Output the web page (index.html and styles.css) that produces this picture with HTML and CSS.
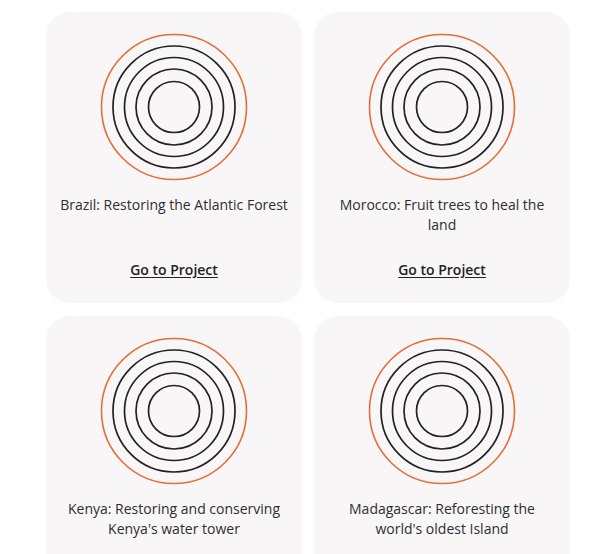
FILE: index.html
```html
<!DOCTYPE html>
<html lang="en">
<head>
<meta charset="utf-8">
<title>Projects</title>
<link rel="stylesheet" href="styles.css">
</head>
<body>
<main class="grid">
  <article class="card">
    <svg class="rings" viewBox="0 0 150 150" width="150" height="150" aria-hidden="true">
      <circle class="outer" cx="75" cy="75" r="72.5"/>
      <circle cx="75" cy="75" r="61"/>
      <circle cx="75" cy="75" r="49.5"/>
      <circle cx="75" cy="75" r="38"/>
      <circle cx="75" cy="75" r="25.5"/>
    </svg>
    <h2 class="title">Brazil: Restoring the Atlantic Forest</h2>
    <a class="link" href="#">Go to Project</a>
  </article>
  <article class="card">
    <svg class="rings" viewBox="0 0 150 150" width="150" height="150" aria-hidden="true">
      <circle class="outer" cx="75" cy="75" r="72.5"/>
      <circle cx="75" cy="75" r="61"/>
      <circle cx="75" cy="75" r="49.5"/>
      <circle cx="75" cy="75" r="38"/>
      <circle cx="75" cy="75" r="25.5"/>
    </svg>
    <h2 class="title">Morocco: Fruit trees to heal the land</h2>
    <a class="link" href="#">Go to Project</a>
  </article>
  <article class="card">
    <svg class="rings" viewBox="0 0 150 150" width="150" height="150" aria-hidden="true">
      <circle class="outer" cx="75" cy="75" r="72.5"/>
      <circle cx="75" cy="75" r="61"/>
      <circle cx="75" cy="75" r="49.5"/>
      <circle cx="75" cy="75" r="38"/>
      <circle cx="75" cy="75" r="25.5"/>
    </svg>
    <h2 class="title">Kenya: Restoring and conserving Kenya's water tower</h2>
    <a class="link" href="#">Go to Project</a>
  </article>
  <article class="card">
    <svg class="rings" viewBox="0 0 150 150" width="150" height="150" aria-hidden="true">
      <circle class="outer" cx="75" cy="75" r="72.5"/>
      <circle cx="75" cy="75" r="61"/>
      <circle cx="75" cy="75" r="49.5"/>
      <circle cx="75" cy="75" r="38"/>
      <circle cx="75" cy="75" r="25.5"/>
    </svg>
    <h2 class="title">Madagascar: Reforesting the world's oldest Island</h2>
    <a class="link" href="#">Go to Project</a>
  </article>
</main>
</body>
</html>
```
FILE: styles.css
```css
html, body {
  margin: 0;
  padding: 0;
  background: #ffffff;
}

body {
  font-family: "Open Sans", "Noto Sans", "Liberation Sans", sans-serif;
  color: #2e2e2e;
}

.grid {
  width: 524px;
  margin: 0 auto;
  padding-top: 12px;
  display: grid;
  grid-template-columns: 256px 256px;
  gap: 13px 12px;
}

.card {
  background: #f8f6f7;
  border-radius: 24px;
  padding: 20px 12px 23px;
  display: flex;
  flex-direction: column;
  align-items: center;
  text-align: center;
}

.rings {
  display: block;
  fill: none;
  stroke: #222222;
  stroke-width: 1.7;
}

.rings .outer {
  stroke: #e86c36;
  stroke-width: 1.6;
}

.title {
  margin: 13px 0 0;
  min-height: 40px;
  font-size: 14px;
  line-height: 20px;
  font-weight: 400;
  color: #2e2e2e;
}

.link {
  margin-top: 25px;
  font-size: 14px;
  line-height: 20px;
  font-weight: 600;
  color: #222222;
  text-decoration: underline;
  text-underline-offset: 2px;
}
```
